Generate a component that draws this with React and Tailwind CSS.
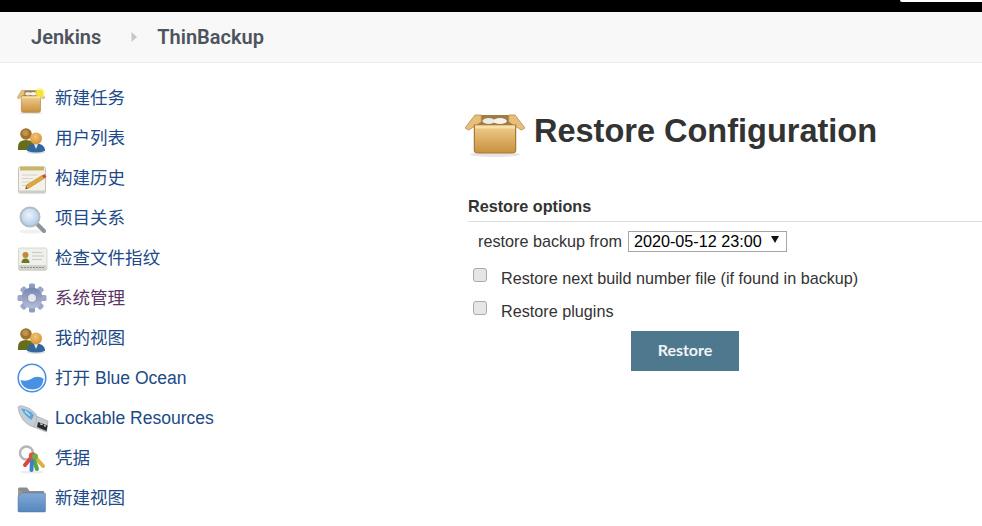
const navItems = [
  { label: '新建任务', icon: NewBox },
  { label: '用户列表', icon: Users },
  { label: '构建历史', icon: Notepad },
  { label: '项目关系', icon: Magnifier },
  { label: '检查文件指纹', icon: IdCard },
  { label: '系统管理', icon: Gear, visited: true },
  { label: '我的视图', icon: Users },
  { label: '打开 Blue Ocean', icon: Ocean },
  { label: 'Lockable Resources', icon: Usb },
  { label: '凭据', icon: Keys },
  { label: '新建视图', icon: Folder },
]

function BoxShape({ id }) {
  return (
    <g>
      <defs>
        <linearGradient id={id} x1="0" y1="0" x2="0" y2="1">
          <stop offset="0" stopColor="#f0cf8e" />
          <stop offset="1" stopColor="#c98f3f" />
        </linearGradient>
      </defs>
      <ellipse cx="24" cy="43.5" rx="20" ry="2.5" fill="#000" opacity="0.1" />
      <path d="M9 9 L13 4 H35 L39 9 V16 H9 Z" fill="#a07c45" />
      <ellipse cx="19" cy="10" rx="5" ry="3" fill="#ecebe6" />
      <ellipse cx="28" cy="10" rx="5.5" ry="3" fill="#f4f3ef" />
      <path d="M13 4 L8 4 L0 17 L3 19 L13 11 Z" fill="#e6bf7c" stroke="#b98a45" strokeWidth="0.7" />
      <path d="M35 4 L40 4 L48 17 L45 19 L35 11 Z" fill="#e6bf7c" stroke="#b98a45" strokeWidth="0.7" />
      <path d="M7.5 14 H40.5 V39 Q40.5 42 37.5 42 H10.5 Q7.5 42 7.5 39 Z" fill={`url(#${id})`} stroke="#a97a35" strokeWidth="1" />
      <rect x="8" y="14.5" width="32" height="3" fill="#f6dfa9" />
    </g>
  )
}

function NewBox() {
  return (
    <svg width="32" height="32" viewBox="0 0 32 32" className="shrink-0">
      <g transform="translate(0 6) scale(0.58)">
        <BoxShape id="box-small" />
      </g>
      <circle cx="23" cy="11" r="5" fill="#fdf27a" opacity="0.6" />
      <circle cx="23" cy="11" r="3.2" fill="#f7e62e" />
    </svg>
  )
}

function Users() {
  return (
    <svg width="32" height="32" viewBox="0 0 32 32" className="shrink-0">
      <defs>
        <radialGradient id="user-head" cx="0.45" cy="0.35" r="0.7">
          <stop offset="0" stopColor="#f5c578" />
          <stop offset="1" stopColor="#d08e2b" />
        </radialGradient>
      </defs>
      <path d="M1 25 Q1 18 9 18 Q17 18 18 25 V28 H1 Z" fill="#666e1e" />
      <circle cx="9" cy="12" r="5.8" fill="#a0722c" />
      <circle cx="8.5" cy="11" r="3" fill="#bd9352" />
      <ellipse cx="19" cy="30.5" rx="9" ry="1.5" fill="#000" opacity="0.12" />
      <path d="M10 29 Q10 21.5 19 21.5 Q28 21.5 28 29 Q19 32 10 29 Z" fill="#33669e" />
      <path d="M17 22 L19 27 L21 22 Z" fill="#e7eef5" />
      <circle cx="19" cy="16.5" r="6" fill="url(#user-head)" />
    </svg>
  )
}

function Notepad() {
  return (
    <svg width="32" height="32" viewBox="0 0 32 32" className="shrink-0">
      <rect x="1.5" y="5" width="27" height="26" rx="1.5" fill="#f4f2e8" stroke="#c4c4bc" />
      <rect x="2" y="28.5" width="26" height="2.5" fill="#cdcdc6" />
      <rect x="3" y="4.5" width="24" height="4" fill="#cbb56b" />
      <path d="M5 13 H20 M5 16.5 H16 M5 20 H13 M5 23.5 H10" stroke="#d2d2cb" strokeWidth="1.2" />
      <path d="M8.5 27 L9.5 23 L25 13.5 L27 16.5 L12 26 Z" fill="#e0a83a" stroke="#a87a24" strokeWidth="0.5" />
      <path d="M25 13.5 L27 16.5 L29.5 15 L28 12 Z" fill="#d8483e" />
      <path d="M8.5 27 L9.5 25 L10.8 26.3 Z" fill="#444" />
    </svg>
  )
}

function Magnifier() {
  return (
    <svg width="32" height="32" viewBox="0 0 32 32" className="shrink-0">
      <defs>
        <radialGradient id="lens" cx="0.45" cy="0.4" r="0.65">
          <stop offset="0" stopColor="#ebf3fb" />
          <stop offset="1" stopColor="#a9c8e6" />
        </radialGradient>
      </defs>
      <ellipse cx="14" cy="29.5" rx="12" ry="2" fill="#000" opacity="0.06" />
      <path d="M20 22 L27 29" stroke="#8f949a" strokeWidth="4" strokeLinecap="round" />
      <circle cx="13" cy="15" r="9.5" fill="url(#lens)" stroke="#b4bcc4" strokeWidth="2" />
    </svg>
  )
}

function IdCard() {
  return (
    <svg width="32" height="32" viewBox="0 0 32 32" className="shrink-0">
      <rect x="1.5" y="6" width="28.5" height="22.5" rx="1.5" fill="#f0f0ea" stroke="#d8d8d2" />
      <rect x="2" y="23" width="27.5" height="5" fill="#d2d2cd" />
      <path d="M4.5 21 Q4.5 16.5 8.5 16.5 Q12.5 16.5 12.5 21 Z" fill="#6c7a24" />
      <circle cx="8.5" cy="13" r="3" fill="#c08a3a" />
      <path d="M15 10.5 H25 M15 14 H27 M15 17.5 H25" stroke="#c8c8c2" strokeWidth="1.2" />
      <path d="M4 25.5 H27" stroke="#8d8d88" strokeWidth="1" strokeDasharray="2 1" />
    </svg>
  )
}

function Gear() {
  const teeth = [0, 45, 90, 135]
  return (
    <svg width="32" height="32" viewBox="0 0 32 32" className="shrink-0">
      <defs>
        <linearGradient id="gear" x1="0" y1="0" x2="0" y2="1">
          <stop offset="0" stopColor="#7486ae" />
          <stop offset="1" stopColor="#b9bdd8" />
        </linearGradient>
      </defs>
      <g fill="url(#gear)" transform="translate(-1 0)">
        {teeth.map((t) => (
          <rect key={t} x="13" y="1.5" width="6" height="29" rx="1.5" transform={`rotate(${t} 16 16)`} fill={t === 0 ? '#8f9cc2' : '#9da7c8'} />
        ))}
        <circle cx="16" cy="16" r="10.5" />
        <circle cx="16" cy="16" r="4.5" fill="#e6e8f1" stroke="#7d86a8" strokeWidth="0.8" />
      </g>
    </svg>
  )
}

function Ocean() {
  return (
    <svg width="32" height="32" viewBox="0 0 32 32" className="shrink-0">
      <circle cx="15" cy="16" r="13.8" fill="#fff" stroke="#4a90e2" strokeWidth="1.6" />
      <path d="M3.5 18 Q9 20 14 17 Q20 13 26.5 16.5 Q26 27.5 15 27.5 Q5 27 3.5 18 Z" fill="#4a90e2" />
    </svg>
  )
}

function Usb() {
  return (
    <svg width="32" height="32" viewBox="0 0 32 32" className="shrink-0">
      <path d="M17 13 L31 19 L29.5 30 L14 24 Z" fill="#c8ccd0" stroke="#8a8c90" strokeWidth="0.5" />
      <path d="M21 20 L30.5 23.5 L29.5 29 L20 25 Z" fill="#2b2b2d" />
      <path d="M23 21.8 L25.5 22.8 M27 23.4 L29 24.2" stroke="#e0e0e0" strokeWidth="1.2" />
      <path d="M1 5 Q2 3 6 4 Q14 6 19 12 L20 16 L17 25 Q11 24 6 18 Q1 11 1 5 Z" fill="#c6ccd4" stroke="#a4a9b0" strokeWidth="0.6" />
      <path d="M4 6.5 Q11 7 17 13 L14.5 18 Q8 14 4 6.5 Z" fill="#5aa7dc" />
      <path d="M8 9 L13 13.5" stroke="#cfe8f7" strokeWidth="1.2" />
    </svg>
  )
}

function Keys() {
  return (
    <svg width="32" height="32" viewBox="0 0 32 32" className="shrink-0">
      <ellipse cx="15" cy="30" rx="12" ry="1.6" fill="#000" opacity="0.07" />
      <circle cx="9.5" cy="11" r="6.5" fill="none" stroke="#b6b6b6" strokeWidth="2.4" />
      <path d="M18 15 L26 24" stroke="#d9b53c" strokeWidth="4" strokeLinecap="round" />
      <path d="M13 17 L8 23" stroke="#d9483b" strokeWidth="4" strokeLinecap="round" />
      <path d="M16 15 L20 27" stroke="#4fa94a" strokeWidth="4" strokeLinecap="round" />
      <path d="M15 18 L14.5 28" stroke="#3f7fc7" strokeWidth="4" strokeLinecap="round" />
      <circle cx="15.5" cy="14" r="3.8" fill="#d9573f" />
      <circle cx="18" cy="14.5" r="3" fill="#6cae50" />
    </svg>
  )
}

function Folder() {
  return (
    <svg width="32" height="32" viewBox="0 0 32 32" className="shrink-0">
      <defs>
        <linearGradient id="folder" x1="0" y1="0" x2="0" y2="1">
          <stop offset="0" stopColor="#82a9d5" />
          <stop offset="1" stopColor="#5586bd" />
        </linearGradient>
      </defs>
      <path d="M1 7 Q1 5.5 2.5 5.5 H10 L12.5 9 H27 V14 H1 Z" fill="#8c8c8c" />
      <path d="M1 7 V29 H5 V10 Z" fill="#9a9a9a" />
      <path d="M4.5 11 H27.5 Q28.5 11 28.5 12 V29 Q28.5 30 27.5 30 H2 Q1 30 1 29 V15 Z" fill="url(#folder)" stroke="#4f79a8" strokeWidth="0.5" />
    </svg>
  )
}

function NavLink({ label, icon: Icon, visited }) {
  return (
    <a href="#" className={visited ? 'flex h-10 items-center gap-[6px] text-[#5c3566]' : 'flex h-10 items-center gap-[6px] text-[#204a87]'}>
      <span className="blur-[0.4px]">
        <Icon />
      </span>
      <span>{label}</span>
    </a>
  )
}

function CheckRow({ label, className }) {
  return (
    <label className={`flex items-center ${className}`}>
      <input type="checkbox" className="relative top-[-4px] ml-[8px] h-[14px] w-[14px] appearance-none rounded-[3px] border border-[#a9a9a9] bg-[#e6e6e6]" />
      <span className="ml-[14px]">{label}</span>
    </label>
  )
}

export default function App() {
  return (
    <div className="h-[526px] overflow-hidden bg-white font-['Liberation_Sans','Noto_Sans_CJK_SC',sans-serif] text-[#333]">
      <div className="flex h-3 items-start justify-end bg-black">
        <div className="h-[2px] w-[82px] rounded-bl-sm bg-white" />
      </div>

      <div className="flex h-[51px] items-center border-b border-[#e9eeee] bg-[#f8f8f8] pl-[31px] font-['Roboto',sans-serif] text-[20px] font-semibold text-[#4d545d]">
        <a href="#">Jenkins</a>
        <svg width="7" height="12" viewBox="0 0 7 12" className="ml-[30px] mr-[19px]">
          <path d="M0.5 1 L6 6 L0.5 11 Z" fill="#c4c7cb" />
        </svg>
        <a href="#">ThinBackup</a>
      </div>

      <div className="flex">
        <nav className="w-[465px] shrink-0 pl-[17px] pt-[15px] text-[17.55px]">
          {navItems.map((item) => (
            <NavLink key={item.label} {...item} />
          ))}
        </nav>

        <main className="flex-1 pt-[44px]">
          <div className="flex h-12 items-center">
            <svg width="60" height="48" viewBox="0 0 48 48" preserveAspectRatio="none" className="mt-[8px] shrink-0 blur-[0.4px]">
              <BoxShape id="box-large" />
            </svg>
            <h1 className="ml-[9px] text-[32.5px] font-bold">Restore Configuration</h1>
          </div>

          <h2 className="ml-[3px] mt-[37px] h-[30px] border-b border-[#dddddd] pt-[4px] text-[16.2px] font-bold leading-[20px]">Restore options</h2>

          <div className="ml-[13px] mt-[9px] flex h-[21px] items-center text-[16.2px]">
            <span>restore backup from</span>
            <div className="relative ml-[6px]">
              <select className="h-[21px] w-[159px] appearance-none rounded-none border border-[#a6a6a6] bg-white pl-[5px] text-[16.2px] leading-[19px] text-black">
                <option>2020-05-12 23:00</option>
              </select>
              <svg width="8" height="7" viewBox="0 0 8 7" className="pointer-events-none absolute right-[8px] top-[7px]">
                <path d="M0 0 H8 L4 7 Z" fill="#111" />
              </svg>
            </div>
          </div>

          <CheckRow label="Restore next build number file (if found in backup)" className="mt-[17px] h-[19px] text-[16.2px]" />
          <CheckRow label="Restore plugins" className="mt-[14px] h-[19px] text-[16.2px]" />

          <button className="ml-[166px] mt-[10px] h-10 w-[108px] bg-[#4d788e] pb-[2px] font-['Lato',sans-serif] text-[16px] font-bold text-[#f1f4f6]">Restore</button>
        </main>
      </div>
    </div>
  )
}
